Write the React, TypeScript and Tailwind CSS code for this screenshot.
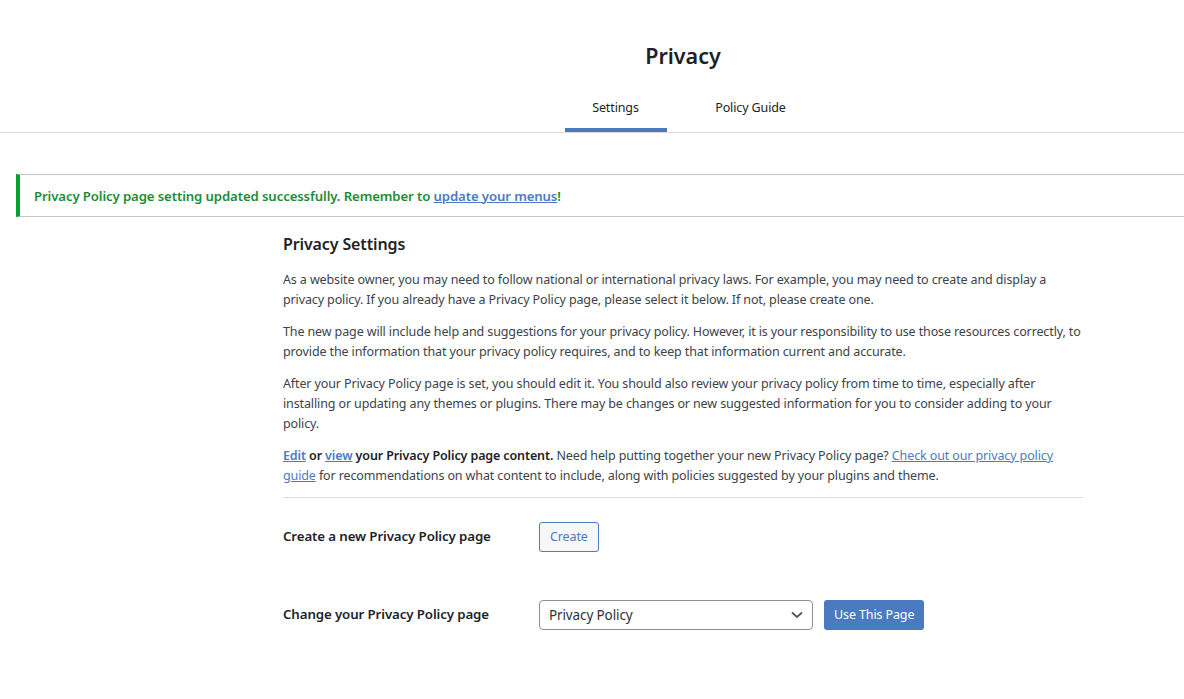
import React from "react";

export default function App() {
  const font = { fontFamily: '"Noto Sans", "Open Sans", sans-serif' };
  return (
    <div className="min-h-[699px] w-[1184px] overflow-hidden bg-white text-[12.5px] tracking-[-0.12px] text-[#3c434a]" style={font}>
      {/* Header */}
      <div className="border-b border-[#dcdcde] pl-[182px]">
        <div className="flex flex-col items-center">
          <h1 className="mt-[40px] text-[21.5px] font-semibold leading-[32px] tracking-[0px] text-[#1d2327]">Privacy</h1>
          <div className="mt-[15px] flex gap-[33px]">
            <div className="flex h-[45px] w-[102px] items-center justify-center border-b-4 border-[#4a7bc0] pt-[1px] text-[#1d2327]">
              Settings
            </div>
            <div className="flex h-[45px] w-[102px] items-center justify-center border-b-4 border-transparent pt-[1px] text-[#1d2327]">
              Policy Guide
            </div>
          </div>
        </div>
      </div>

      {/* Notice */}
      <div className="mt-[41px] ml-[16px] flex h-[43px] items-center border-y border-[#c3c4c7] border-l-4 border-l-[#00a32a] pl-[14px] pt-[2px] text-[13.2px] font-semibold">
        <span className="text-[#1e8c36]">
          Privacy Policy page setting updated successfully. Remember to{" "}
          <a href="#" className="text-[#4a7bc0] underline">update your menus</a>!
        </span>
      </div>

      {/* Body */}
      <div className="ml-[283px] w-[800px]">
        <h2 className="mt-[16px] text-[16px] font-semibold leading-[22px] text-[#1d2327]">Privacy Settings</h2>
        <div className="mt-[15px] flex flex-col gap-[12px] leading-[20px]">
          <p>
            As a website owner, you may need to follow national or international privacy laws. For example, you may need to create and display a privacy policy. If you already have a Privacy Policy page, please select it below. If not, please create one.
          </p>
          <p>
            The new page will include help and suggestions for your privacy policy. However, it is your responsibility to use those resources correctly, to provide the information that your privacy policy requires, and to keep that information current and accurate.
          </p>
          <p>
            After your Privacy Policy page is set, you should edit it. You should also review your privacy policy from time to time, especially after installing or updating any themes or plugins. There may be changes or new suggested information for you to consider adding to your policy.
          </p>
          <p>
            <strong className="font-semibold text-[#1d2327]">
              <a href="#" className="text-[#4a7bc0] underline">Edit</a> or{" "}
              <a href="#" className="text-[#4a7bc0] underline">view</a> your Privacy Policy page content.
            </strong>{" "}
            Need help putting together your new Privacy Policy page?{" "}
            <a href="#" className="text-[#4a7bc0] underline">Check out our privacy policy guide</a> for recommendations on what content to include, along with policies suggested by your plugins and theme.
          </p>
        </div>
        <hr className="mt-[11px] border-t border-[#dcdcde]" />

        <div className="mt-[24px] flex items-center">
          <div className="w-[256px] text-[13.3px] font-semibold text-[#1d2327]">Create a new Privacy Policy page</div>
          <button className="h-[30px] rounded-[3px] border border-[#4a7bc0] bg-[#f6f7f7] px-[10px] text-[#4a7bc0]">
            Create
          </button>
        </div>

        <div className="mt-[48px] flex items-center">
          <div className="w-[256px] text-[13.3px] font-semibold text-[#1d2327]">Change your Privacy Policy page</div>
          <div className="relative flex h-[30px] w-[274px] items-center rounded-[4px] border border-[#8c8f94] pl-[9px] text-[13.5px] text-[#2c3338]">
            Privacy Policy
            <svg className="absolute right-[8px] top-[9px]" width="14" height="10" viewBox="0 0 14 10" fill="none">
              <path d="M2 2.5 L7 7 L12 2.5" stroke="#50575e" strokeWidth="1.8" />
            </svg>
          </div>
          <button className="ml-[11px] h-[30px] rounded-[3px] bg-[#4a7bc0] px-[10px] text-[#fff]">
            Use This Page
          </button>
        </div>
      </div>
    </div>
  );
}
